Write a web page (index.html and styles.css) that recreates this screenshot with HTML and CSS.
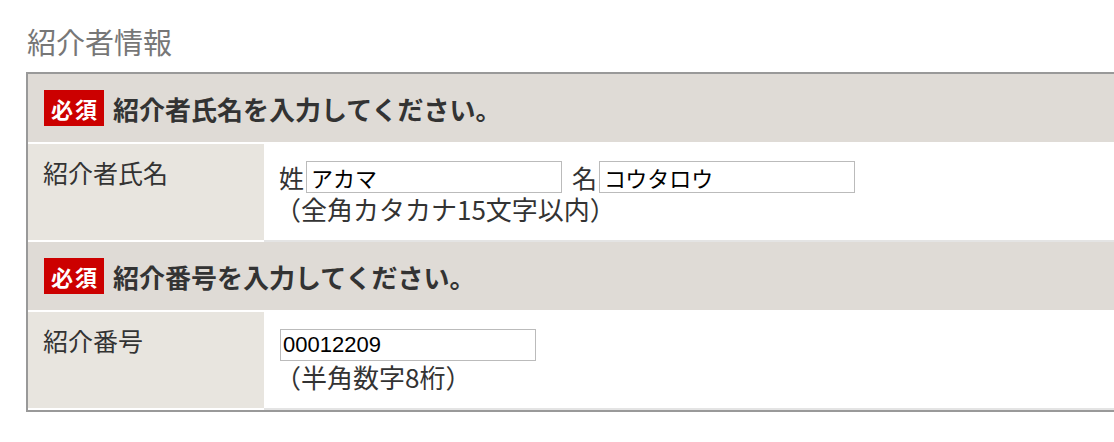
FILE: index.html
```html
<html>
    <head>
    <meta charset="UTF-8">
    <link rel="stylesheet" href="styles.css">
    <title>紹介者情報</title>
    </head>
    <body>
    <h2 class="section-title">紹介者情報</h2>

    <div class="form-box">
        <!-- 紹介者氏名 -->
        <div class="form-head"><span class="badge">必須</span>紹介者氏名を入力してください。</div>
        <div class="form-row">
            <div class="form-label">紹介者氏名</div>
            <div class="form-value">
                <div class="name-line">
                    <span>姓</span><input class="text-input" type="text" value="アカマ">
                    <span class="second">名</span><input class="text-input" type="text" value="コウタロウ">
                </div>
                <div class="note">（全角カタカナ15文字以内）</div>
            </div>
        </div>

        <!-- 紹介番号 -->
        <div class="form-head"><span class="badge">必須</span>紹介番号を入力してください。</div>
        <div class="form-row">
            <div class="form-label">紹介番号</div>
            <div class="form-value">
                <input class="text-input number" type="text" value="00012209">
                <div class="note">（半角数字8桁）</div>
            </div>
        </div>
    </div>
    </body>
</html>
```

FILE: styles.css
```css
*{
    box-sizing: border-box;
}
body{
    margin: 0;
    overflow: hidden;
    background: #fff;
    font-family: "Noto Sans CJK JP", "Liberation Sans", sans-serif;
    color: #333;
}
.section-title{
    margin: 0;
    padding: 22px 0 0 27px;
    font-size: 29px;
    font-weight: normal;
    line-height: 39px;
    color: #777;
}
.form-box{
    margin: 11px 0 0 26px;
    width: 1120px;
    border: 2px solid #999;
    border-right: none;
}
.form-head{
    display: flex;
    align-items: center;
    height: 68px;
    padding-left: 16px;
    background: #dfdbd6;
    font-size: 26px;
    font-weight: bold;
    color: #333;
}
.badge{
    display: inline-flex;
    align-items: center;
    justify-content: center;
    width: 60px;
    height: 36px;
    margin-right: 9px;
    background: #cc0000;
    color: #fff;
    font-size: 22px;
    letter-spacing: 2px;
    padding-left: 2px;
}
.form-row{
    display: flex;
    height: 98px;
    margin-top: 2px;
}
.form-label{
    width: 236px;
    padding: 11px 0 0 15px;
    background: #e8e5df;
    border-bottom: 2px solid #fff;
    font-size: 25px;
    line-height: 35px;
}
.form-value{
    flex: 1;
    padding: 17px 0 0 15px;
    border-bottom: 2px solid #e4e4e4;
    font-size: 25px;
    color: #333;
}
.name-line{
    display: flex;
    align-items: center;
    height: 32px;
    line-height: 28px;
}
.name-line .text-input{
    margin-left: 2px;
}
.name-line .second{
    margin-left: 10px;
}
.text-input{
    display: block;
    width: 256px;
    height: 32px;
    margin: 0;
    padding: 0 4px;
    border: 1px solid #bbb;
    border-radius: 0;
    font-family: "Noto Sans CJK JP", sans-serif;
    font-size: 22px;
    color: #000;
    background: #fff;
    outline: none;
}
.text-input.number{
    margin-left: 1px;
    padding: 0 2px;
    font-family: "Liberation Sans", sans-serif;
}
.note{
    margin-top: 2px;
    margin-left: -4px;
    font-size: 26px;
    line-height: 28px;
}
```
